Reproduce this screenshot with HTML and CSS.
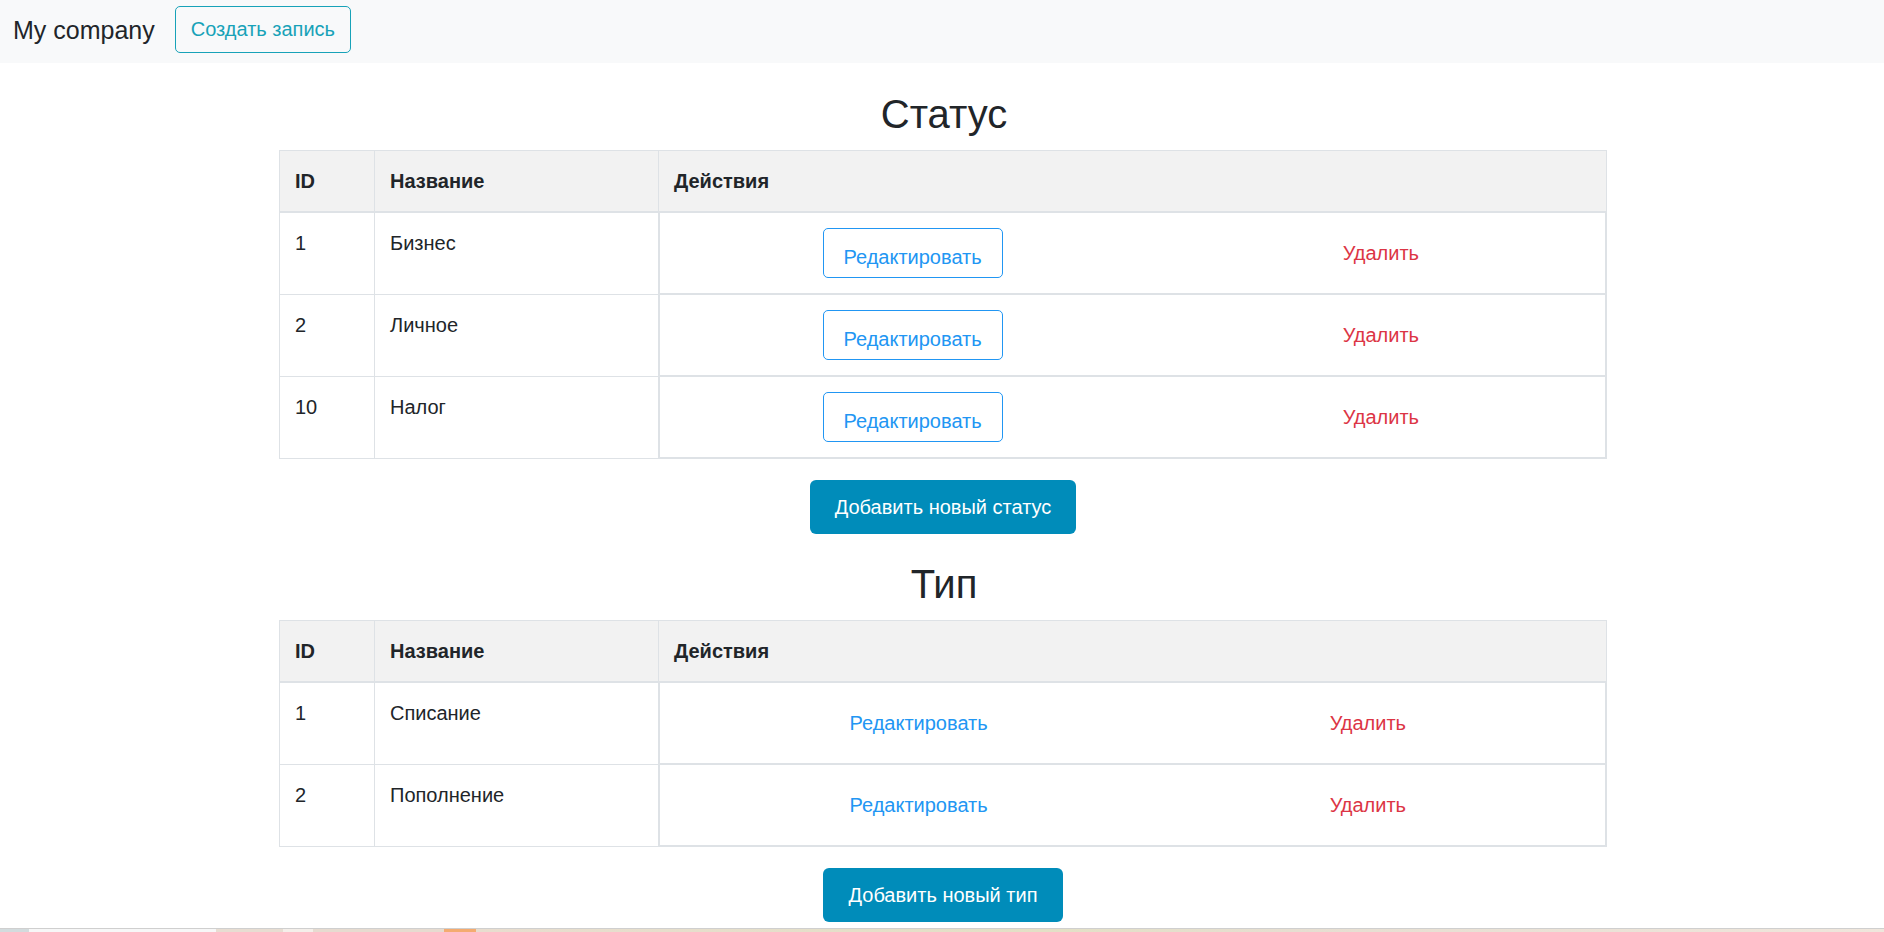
FILE: index.html
```html
<!DOCTYPE html>
<html lang="ru">
<head>
<meta charset="utf-8">
<title>My company</title>
<link rel="stylesheet" href="styles.css">
</head>
<body>
<nav class="navbar">
  <span class="brand">My company</span>
  <a class="btn-outline-info" href="#">Создать запись</a>
</nav>
<main class="content">
  <h2 class="title">Статус</h2>
  <table class="data-table">
    <colgroup><col class="col-id"><col class="col-name"><col></colgroup>
    <thead>
      <tr><th>ID</th><th>Название</th><th>Действия</th></tr>
    </thead>
    <tbody>
      <tr><td>1</td><td>Бизнес</td><td class="actions"><div class="actions-inner"><a class="btn-edit" href="#">Редактировать</a><a class="link-delete" href="#">Удалить</a></div></td></tr>
      <tr><td>2</td><td>Личное</td><td class="actions"><div class="actions-inner"><a class="btn-edit" href="#">Редактировать</a><a class="link-delete" href="#">Удалить</a></div></td></tr>
      <tr><td>10</td><td>Налог</td><td class="actions"><div class="actions-inner"><a class="btn-edit" href="#">Редактировать</a><a class="link-delete" href="#">Удалить</a></div></td></tr>
    </tbody>
  </table>
  <a class="btn-add" href="#">Добавить новый статус</a>

  <h2 class="title title-second">Тип</h2>
  <table class="data-table">
    <colgroup><col class="col-id"><col class="col-name"><col></colgroup>
    <thead>
      <tr><th>ID</th><th>Название</th><th>Действия</th></tr>
    </thead>
    <tbody>
      <tr><td>1</td><td>Списание</td><td class="actions"><div class="actions-inner actions-links"><a class="link-edit" href="#">Редактировать</a><a class="link-delete" href="#">Удалить</a></div></td></tr>
      <tr><td>2</td><td>Пополнение</td><td class="actions"><div class="actions-inner actions-links"><a class="link-edit" href="#">Редактировать</a><a class="link-delete" href="#">Удалить</a></div></td></tr>
    </tbody>
  </table>
  <a class="btn-add" href="#">Добавить новый тип</a>
</main>
<div class="bottom-strip"></div>
</body>
</html>
```
FILE: styles.css
```css
html, body {
  margin: 0;
  padding: 0;
  background: #ffffff;
}
body {
  font-family: "Liberation Sans", Arial, sans-serif;
  font-size: 20px;
  line-height: 30px;
  color: #212529;
  height: 932px;
  overflow: hidden;
  display: flex;
  flex-direction: column;
}
a { text-decoration: none; }

.navbar {
  height: 63px;
  box-sizing: border-box;
  background: #f8f9fa;
  display: flex;
  align-items: center;
  padding: 0 13px 4px 13px;
  gap: 20px;
}
.brand {
  font-size: 25px;
  line-height: 30px;
  color: #212529;
}
.btn-outline-info {
  display: inline-block;
  box-sizing: border-box;
  height: 47px;
  padding: 7px 15px;
  border: 1px solid #17a2b8;
  border-radius: 5px;
  color: #17a2b8;
  font-size: 20px;
  line-height: 31px;
}

.content {
  display: flex;
  flex-direction: column;
  align-items: center;
  padding-left: 2px;
}
.title {
  margin: 27px 0 12px 2px;
  font-size: 40px;
  line-height: 48px;
  font-weight: 400;
  color: #212529;
}
.title-second { margin-top: 26px; }

.data-table {
  width: 1328px;
  border-collapse: collapse;
  table-layout: fixed;
}
.col-id { width: 95px; }
.col-name { width: 284px; }
.data-table th,
.data-table td {
  border: 1px solid #dee2e6;
  padding: 15px;
  text-align: left;
  vertical-align: top;
}
.data-table th {
  background: #f2f2f2;
  font-weight: 700;
  border-bottom-width: 2px;
}
.data-table td.actions {
  padding: 0;
  border-width: 2px;
  vertical-align: middle;
}
.actions-inner {
  display: flex;
  align-items: center;
  padding: 15px 15px;
  height: 50px;
}
.btn-edit {
  display: inline-block;
  box-sizing: border-box;
  height: 50px;
  padding: 13px 20px 5px 20px;
  border: 1px solid #2196f3;
  border-radius: 5px;
  color: #2196f3;
  line-height: 30px;
  margin-left: 148px;
}
.link-delete {
  color: #dc3545;
  margin-left: 340px;
}
.actions-links .link-edit {
  color: #2196f3;
  margin-left: 175px;
}
.actions-links .link-delete {
  margin-left: 342px;
}

.btn-add {
  display: inline-block;
  margin-top: 21px;
  padding: 12px 25px;
  background: #008cba;
  color: #ffffff;
  border-radius: 6px;
  line-height: 30px;
}

.bottom-strip {
  margin-top: 6px;
  height: 3px;
  flex: none;
  background: linear-gradient(to right,
    #d3dbdd 0, #d3dbdd 29px,
    #f7f7f7 29px, #f7f7f7 216px,
    #e7ddd2 216px, #e7ddd2 283px,
    #f4efea 283px, #f4efea 313px,
    #e6dbd0 313px, #e6dbd0 444px,
    #f4ab70 444px, #f4ab70 476px,
    #e8ddcf 476px, #e3e0c6 1040px,
    #e6ded1 1300px, #efe6dc 1884px);
  border-top: 1px solid #cfcfcf;
}
```
